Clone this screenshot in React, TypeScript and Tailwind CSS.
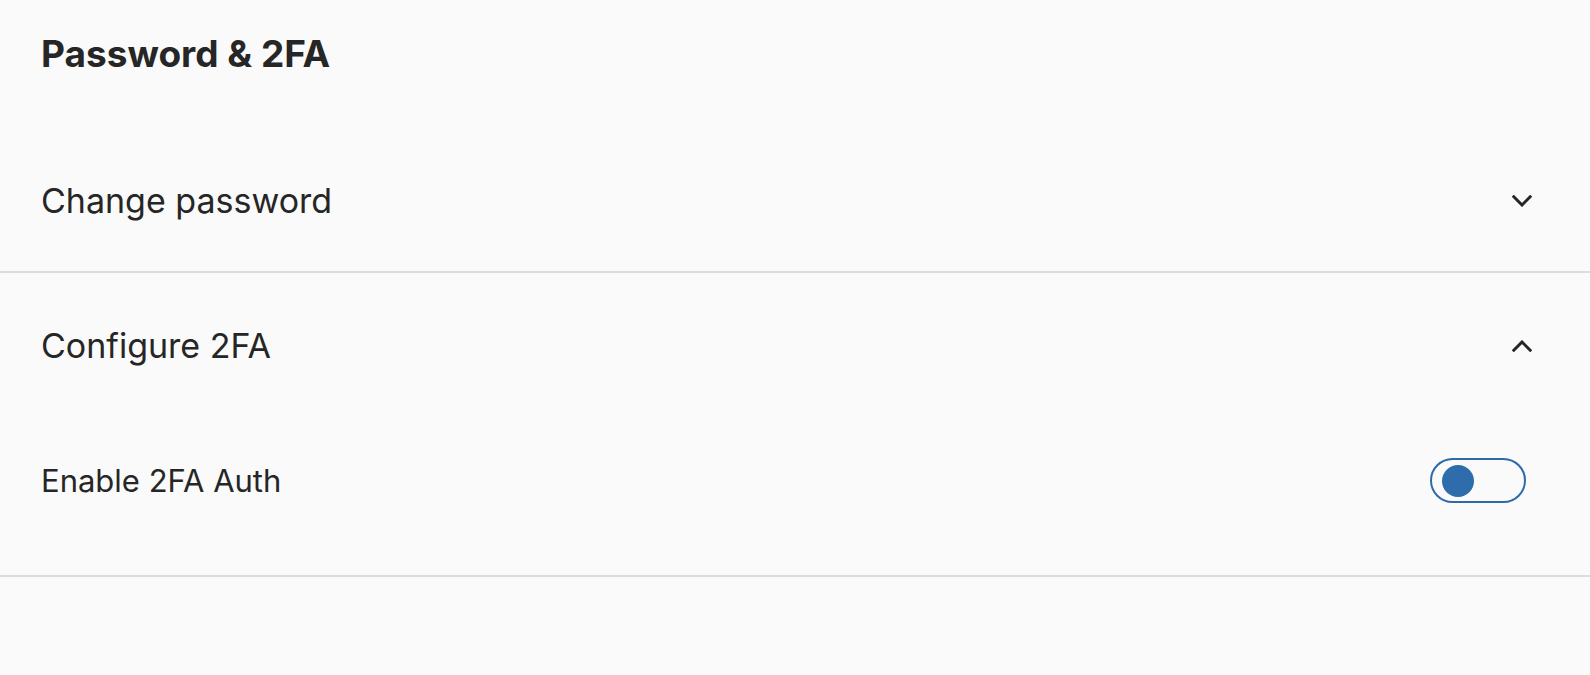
import { useState } from "react";

function Chevron({ up }: { up?: boolean }) {
  return (
    <svg width="20" height="12" viewBox="0 0 20 12" className={up ? "rotate-180" : ""}>
      <polyline
        points="1.8,1.8 10,10 18.2,1.8"
        fill="none"
        stroke="#262626"
        strokeWidth="3"
        strokeLinecap="square"
        strokeLinejoin="miter"
      />
    </svg>
  );
}

export default function App() {
  const [open, setOpen] = useState(true);
  const [enabled, setEnabled] = useState(false);

  return (
    <div
      className="min-h-[675px] w-full bg-[#fafafa] text-[#262626]"
      style={{ fontFamily: "Inter, 'Noto Sans', sans-serif" }}
    >
      <div className="flex h-[130px] items-start px-[41px] pt-[33px]">
        <h1 className="text-[37px] font-bold leading-[42px]">Password &amp; 2FA</h1>
      </div>

      <div className="border-b-2 border-[#dcdcdc]">
        <button className="flex h-[141px] w-full items-center justify-between pl-[41px] pr-[58px]">
          <span className="text-[34px] leading-none">Change password</span>
          <Chevron />
        </button>
      </div>

      <div className="border-b-2 border-[#dcdcdc]">
        <button
          className="flex h-[146px] w-full items-center justify-between pl-[41px] pr-[58px]"
          onClick={() => setOpen(!open)}
        >
          <span className="text-[34px] leading-none">Configure 2FA</span>
          <Chevron up={open} />
        </button>
        {open && (
          <div className="flex items-center justify-between pb-[72px] pl-[41px] pr-[64px] pt-[39px]">
            <span className="text-[31px] leading-none">Enable 2FA Auth</span>
            <button
              className="flex h-[45px] w-[96px] items-center rounded-full border-2 border-[#2f6aa8] pl-[10px]"
              onClick={() => setEnabled(!enabled)}
            >
              <span
                className={
                  enabled
                    ? "ml-[48px] h-[32px] w-[32px] rounded-full bg-[#2f6cab]"
                    : "h-[32px] w-[32px] rounded-full bg-[#2f6cab]"
                }
              />
            </button>
          </div>
        )}
      </div>
    </div>
  );
}
